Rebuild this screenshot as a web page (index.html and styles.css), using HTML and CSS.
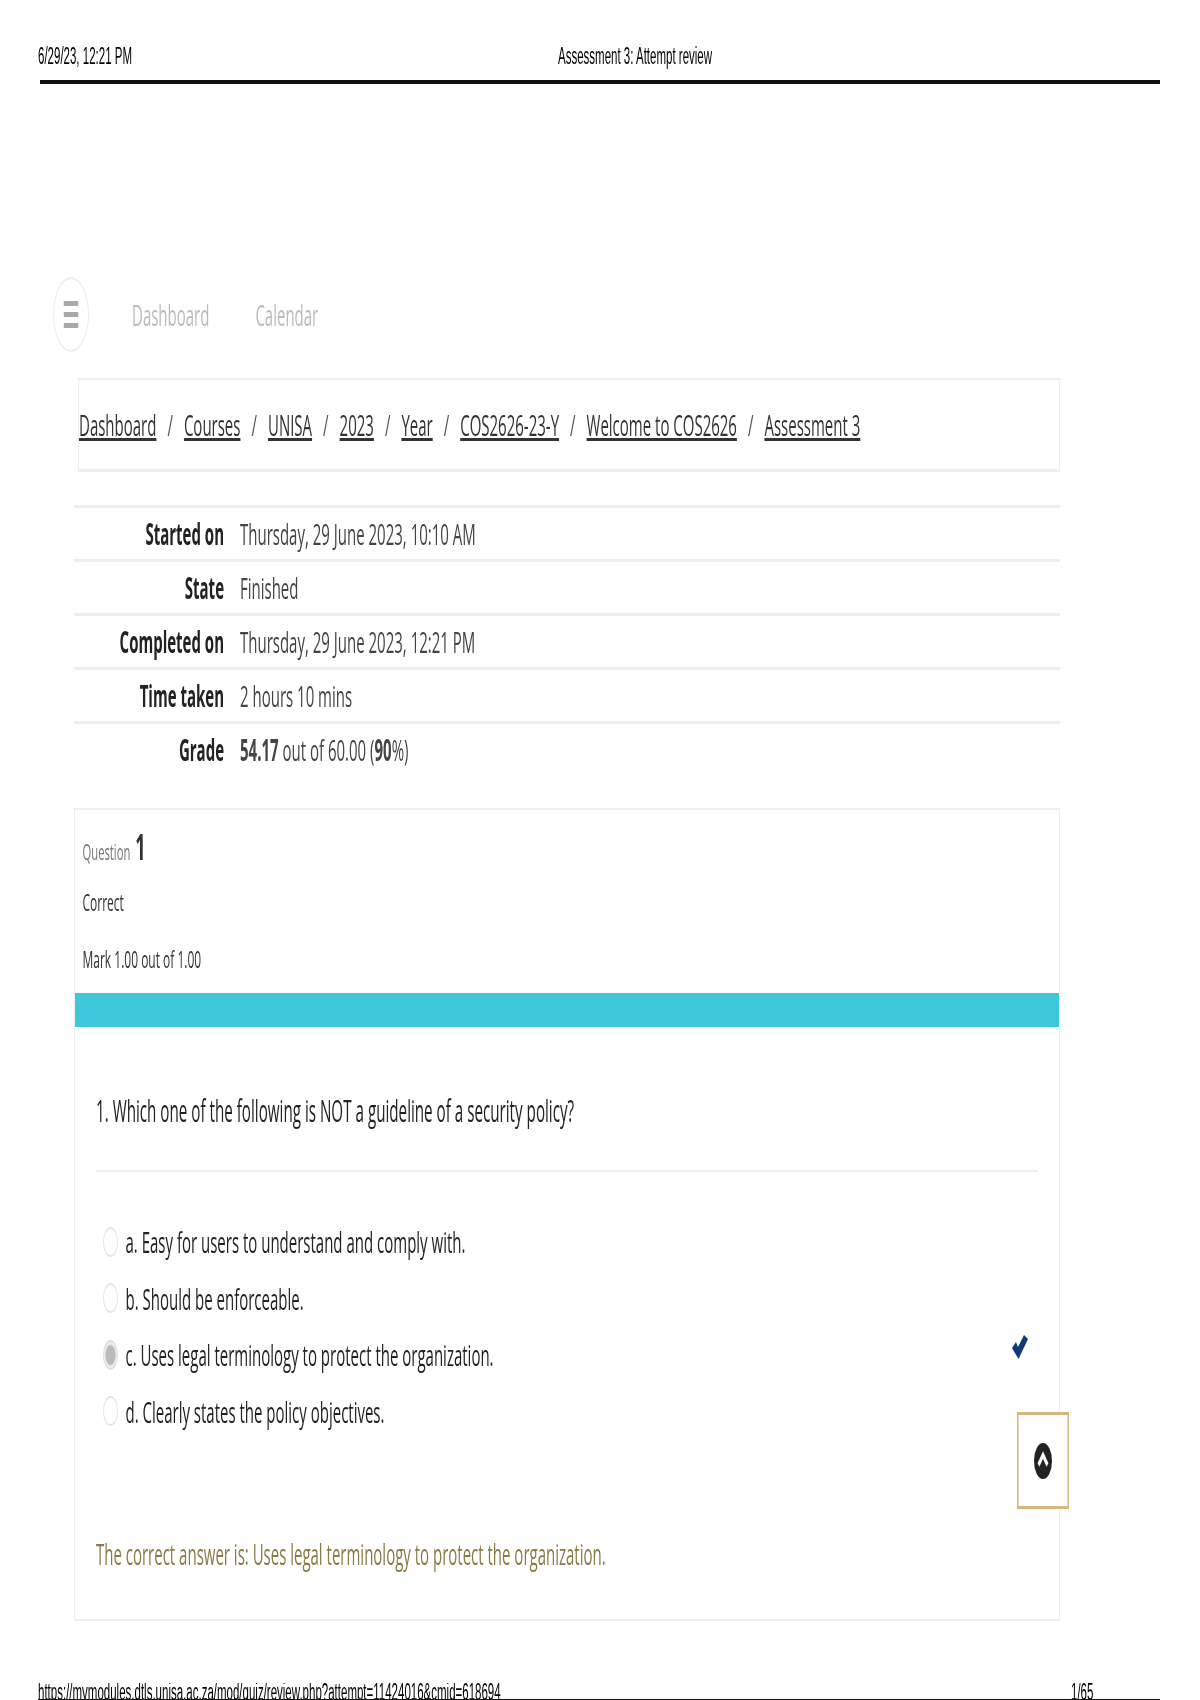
FILE: index.html
```html
<!DOCTYPE html>
<html lang="en">
<head>
    <meta charset="UTF-8">
    <title>Assessment 3: Attempt review</title>
    <link rel="stylesheet" href="styles.css">
</head>
<body>
    <div class="page">
        <div class="print-head">
            <span>6/29/23, 12:21 PM</span>
            <span>Assessment 3: Attempt review</span>
        </div>

        <nav class="top-nav">
            <div class="menu-btn">
                <svg class="menu-icon" viewBox="0 0 30 28" fill="#aaa">
                    <rect x="0" y="0" width="30" height="5"></rect>
                    <rect x="0" y="11" width="30" height="5"></rect>
                    <rect x="0" y="22" width="30" height="5"></rect>
                </svg>
            </div>
            <a>Dashboard</a>
            <a>Calendar</a>
        </nav>

        <div class="crumbs">
            <a>Dashboard</a><span>/</span>
            <a>Courses</a><span>/</span>
            <a>UNISA</a><span>/</span>
            <a>2023</a><span>/</span>
            <a>Year</a><span>/</span>
            <a>COS2626-23-Y</a><span>/</span>
            <a>Welcome to COS2626</a><span>/</span>
            <a>Assessment 3</a>
        </div>

        <table class="summary">
            <tr><th>Started on</th><td>Thursday, 29 June 2023, 10:10 AM</td></tr>
            <tr><th>State</th><td>Finished</td></tr>
            <tr><th>Completed on</th><td>Thursday, 29 June 2023, 12:21 PM</td></tr>
            <tr><th>Time taken</th><td>2 hours 10 mins</td></tr>
            <tr><th>Grade</th><td><b>54.17</b> out of 60.00 (<b>90</b>%)</td></tr>
        </table>

        <section class="question">
            <div class="q-info">
                <div class="q-no">Question <b>1</b></div>
                <div class="q-state">Correct</div>
                <div class="q-mark">Mark 1.00 out of 1.00</div>
            </div>
            <div class="q-bar"></div>
            <div class="q-body">
                <p class="q-text">1. Which one of the following is NOT a guideline of a security policy?</p>
                <div class="options">
                    <div class="option"><i class="radio"></i>a. Easy for users to understand and comply with.</div>
                    <div class="option"><i class="radio"></i>b. Should be enforceable.</div>
                    <div class="option"><i class="radio checked"></i>c. Uses legal terminology to protect the organization.
                        <svg class="tick" viewBox="0 0 32 24" fill="#0f3a7a">
                            <path d="M0 13 L8 7 L12 12 L24 0 L32 4 L13 24 Z"></path>
                        </svg>
                    </div>
                    <div class="option"><i class="radio"></i>d. Clearly states the policy objectives.</div>
                </div>
                <p class="feedback">The correct answer is: Uses legal terminology to protect the organization.</p>
            </div>
        </section>

        <div class="to-top">
            <svg class="to-top-icon" viewBox="0 0 36 36">
                <circle cx="18" cy="18" r="18" fill="#222"></circle>
                <path d="M9 22 L18 12 L27 22" fill="none" stroke="#fff" stroke-width="5"></path>
            </svg>
        </div>

        <div class="print-foot">
            <span>https://mymodules.dtls.unisa.ac.za/mod/quiz/review.php?attempt=11424016&amp;cmid=618694</span>
            <span>1/65</span>
        </div>
    </div>
</body>
</html>
```

FILE: styles.css
```css
* {
    margin: 0;
    padding: 0;
    box-sizing: border-box;
}

html, body {
    width: 1200px;
    height: 1700px;
    overflow: hidden;
    background: #fff;
}

/* the whole sheet is squeezed to half width, so everything inside is laid out at 2x */
.page {
    position: relative;
    width: 2400px;
    height: 1700px;
    overflow: hidden;
    transform: scaleX(0.5);
    transform-origin: 0 0;
    font-family: "Open Sans", sans-serif;
    color: #222;
    filter: blur(0.5px);
}

.print-head {
    display: grid;
    grid-template-columns: 1036px auto;
    align-items: center;
    height: 84px;
    margin: 0 80px;
    padding-top: 32px;
    border-bottom: 4px solid #111;
    font-family: "Liberation Sans", sans-serif;
    font-size: 23px;
    color: #000;
}

.print-head span:first-child {
    margin-left: -4px;
}

.top-nav {
    display: flex;
    align-items: center;
    height: 75px;
    margin: 193px 0 0 106px;
    font-size: 30px;
    color: #bbb;
}

.menu-btn {
    display: flex;
    align-items: center;
    justify-content: center;
    width: 72px;
    height: 75px;
    border: 2px solid #eee;
    border-radius: 50%;
    margin-right: 86px;
}

.menu-icon {
    width: 30px;
    height: 28px;
}

.top-nav a {
    margin-right: 92px;
}

.crumbs {
    display: flex;
    align-items: center;
    width: 1964px;
    height: 94px;
    margin: 26px 0 0 156px;
    border: 2px solid #eee;
    border-bottom-width: 3px;
    font-size: 30px;
    color: #333;
}

.crumbs a {
    text-decoration: underline;
}

.crumbs span {
    margin: 0 22px;
    color: #555;
}

.summary {
    width: 1972px;
    margin: 33px 0 0 148px;
    border-collapse: collapse;
    font-size: 30px;
}

.summary th, .summary td {
    height: 54px;
    border-top: 3px solid #eee;
    text-align: left;
}

.summary tr:last-child th, .summary tr:last-child td {
    height: 56px;
    padding-bottom: 4px;
}

.summary th {
    width: 300px;
    text-align: right;
    color: #222;
}

.summary td {
    padding-left: 32px;
    color: #444;
}

.question {
    width: 1972px;
    height: 813px;
    margin: 29px 0 0 148px;
    border: 2px solid #eee;
}

.q-info {
    height: 183px;
    padding-left: 15px;
    font-size: 24px;
    color: #333;
}

.q-no {
    display: flex;
    align-items: baseline;
    gap: 10px;
    height: 62px;
    padding-top: 12px;
    font-size: 22.5px;
    color: #777;
}

.q-no b {
    font-size: 36px;
    font-weight: 700;
    color: #333;
}

.q-state {
    margin-top: 13px;
}

.q-mark {
    margin-top: 24px;
}

.q-bar {
    height: 34px;
    background: #3cc8d8;
}

.q-body {
    padding: 0 42px;
    font-size: 30px;
    color: #222;
}

.q-text {
    height: 145px;
    padding-top: 63px;
    border-bottom: 2px solid #eee;
    font-size: 30.4px;
}

.options {
    margin-top: 42px;
}

.option {
    display: flex;
    align-items: center;
    height: 56.5px;
    padding-left: 14px;
}

.radio {
    width: 30px;
    height: 30px;
    margin-right: 15px;
    border: 2px solid #e4e4e4;
    border-radius: 50%;
}

.radio.checked {
    border-color: #ddd;
    background: radial-gradient(circle, #bbb 0 50%, #eee 60%);
}

.tick {
    align-self: flex-start;
    width: 32px;
    height: 24px;
    margin: 8px 20px 0 auto;
}

.feedback {
    margin-top: 93px;
    color: #8a7a45;
}

.to-top {
    position: absolute;
    left: 2034px;
    top: 1412px;
    display: flex;
    align-items: center;
    justify-content: center;
    width: 104px;
    height: 97px;
    border: 3px solid #d9b67f;
    background: #fff;
}

.to-top-icon {
    width: 36px;
    height: 36px;
}

/* the print footer is cut by its own rule, as on the printed page */
.print-foot {
    display: grid;
    grid-template-columns: 2066px auto;
    height: 19px;
    margin: 62px 80px 0 76px;
    border-bottom: 3px solid #111;
    overflow: hidden;
    font-family: "Liberation Sans", sans-serif;
    font-size: 23px;
    line-height: 19px;
    color: #000;
}
```
